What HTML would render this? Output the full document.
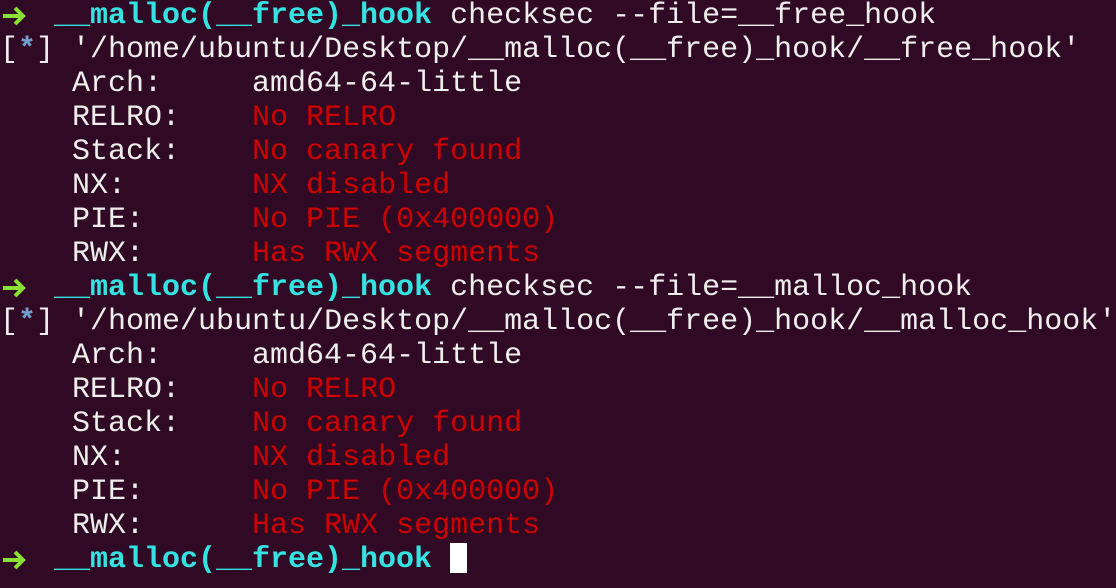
<!DOCTYPE html>
<html><head><meta charset="utf-8"><style>
html,body{margin:0;padding:0;background:#300a24;width:1116px;height:588px;overflow:hidden}
pre{margin:0;position:absolute;top:-1px;left:0;font-family:"Liberation Mono","DejaVu Sans Mono",monospace;font-size:30px;line-height:34px;color:#eeeeec;white-space:pre}
.g{display:inline-block;width:54px;vertical-align:top;height:34px;position:relative}
.g svg{position:absolute;left:2px;top:7px}
.c{color:#34e2e2;font-weight:bold}
.r{color:#cc0000}
.b{color:#729fcf;font-weight:bold}
.cur{display:inline-block;width:17px;height:30px;background:#fff;vertical-align:-6px}
</style></head><body><pre><span class="g"><svg width="24" height="20" viewBox="0 0 24 20"><path d="M1 10H21M13 2L21 10L13 18" stroke="#8ae234" stroke-width="4" fill="none"/></svg></span><span class="c">__malloc(__free)_hook</span> checksec --file=__free_hook
[<span class="b">*</span>] '/home/ubuntu/Desktop/__malloc(__free)_hook/__free_hook'
    Arch:     amd64-64-little
    RELRO:    <span class="r">No RELRO</span>
    Stack:    <span class="r">No canary found</span>
    NX:       <span class="r">NX disabled</span>
    PIE:      <span class="r">No PIE (0x400000)</span>
    RWX:      <span class="r">Has RWX segments</span>
<span class="g"><svg width="24" height="20" viewBox="0 0 24 20"><path d="M1 10H21M13 2L21 10L13 18" stroke="#8ae234" stroke-width="4" fill="none"/></svg></span><span class="c">__malloc(__free)_hook</span> checksec --file=__malloc_hook
[<span class="b">*</span>] '/home/ubuntu/Desktop/__malloc(__free)_hook/__malloc_hook'
    Arch:     amd64-64-little
    RELRO:    <span class="r">No RELRO</span>
    Stack:    <span class="r">No canary found</span>
    NX:       <span class="r">NX disabled</span>
    PIE:      <span class="r">No PIE (0x400000)</span>
    RWX:      <span class="r">Has RWX segments</span>
<span class="g"><svg width="24" height="20" viewBox="0 0 24 20"><path d="M1 10H21M13 2L21 10L13 18" stroke="#8ae234" stroke-width="4" fill="none"/></svg></span><span class="c">__malloc(__free)_hook</span> <span class="cur"></span></pre></body></html>
